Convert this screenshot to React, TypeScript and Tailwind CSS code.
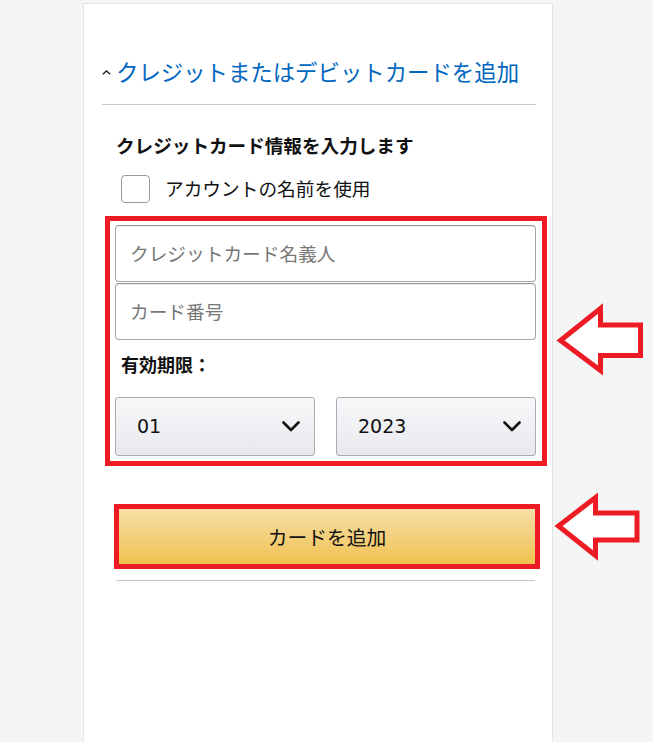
import React from "react";

const FONT = { fontFamily: '"DejaVu Sans", "Noto Sans CJK JP", sans-serif' };
const JP = { fontFamily: '"Noto Sans CJK JP", "DejaVu Sans", sans-serif' };

function Chevron() {
  return (
    <svg width="18" height="11" viewBox="0 0 18 11" className="shrink-0">
      <polyline points="1.5,1.5 9,9 16.5,1.5" fill="none" stroke="#111" strokeWidth="2.6" strokeLinecap="round" strokeLinejoin="round" />
    </svg>
  );
}

function Arrow({ pts }: { pts: string }) {
  return (
    <polygon points={pts} fill="#ffffff" stroke="#ed1c24" strokeWidth="5" strokeLinejoin="miter" strokeMiterlimit={10} />
  );
}

export default function App() {
  return (
    <div className="relative w-[653px] h-[742px] overflow-hidden bg-[#f4f5f5]" style={FONT}>
      <div className="ml-[83px] mt-[3px] w-[470px] h-[739px] bg-white border-t border-l border-r border-[#e3e3e3] pl-[18px] pr-[16px]">
        {/* heading */}
        <div className="pt-[51px] flex items-center h-[83px]">
          <svg width="9" height="5" viewBox="0 0 9 5" className="mt-[3px] shrink-0">
            <polyline points="0.8,4.2 4.5,0.9 8.2,4.2" fill="none" stroke="#222" strokeWidth="1.4" />
          </svg>
          <span className="ml-[5px] text-[22.4px] leading-[32px] text-[#0066c0] whitespace-nowrap" style={JP}>
            クレジットまたはデビットカードを追加
          </span>
        </div>
        <div className="mt-[17px] h-px bg-[#c9c9c9]" />

        <div className="pl-[14px] pr-[1px]">
          <div className="mt-[27px] text-[18.6px] leading-[26px] font-bold text-[#111]" style={JP}>
            クレジットカード情報を入力します
          </div>
          <div className="mt-[17px] flex items-center">
            <div className="ml-[5px] w-[29px] h-[28px] rounded-[4px] border-[1.5px] border-[#9a9a9a] bg-white" />
            <span className="ml-[15px] -mt-[2px] text-[18.7px] leading-[26px] text-[#111]" style={JP}>
              アカウントの名前を使用
            </span>
          </div>

          {/* red highlight box */}
          <div className="mt-[13px] -ml-[11px] w-[442px] border-[5px] border-[#ed1c24] pt-[4px] pl-[5px] pr-[6px] pb-[5px]">
            <div className="h-[57px] rounded-[4px] border border-[#a6a6a6] border-t-[#949494] shadow-[inset_0_1px_0_rgba(0,0,0,0.07)] flex items-center pl-[14px]">
              <span className="text-[18.7px] text-[#777]" style={JP}>クレジットカード名義人</span>
            </div>
            <div className="mt-[1px] h-[57px] rounded-[4px] border border-[#a6a6a6] border-t-[#949494] shadow-[inset_0_1px_0_rgba(0,0,0,0.07)] flex items-center pl-[14px]">
              <span className="text-[18.7px] text-[#777]" style={JP}>カード番号</span>
            </div>
            <div className="mt-[11px] ml-[6px] text-[18px] leading-[26px] font-bold text-[#111]" style={JP}>
              有効期限：
            </div>
            <div className="mt-[20px] flex justify-between">
              <div className="w-[200px] h-[59px] rounded-[3px] border border-[#a9adb3] bg-gradient-to-b from-[#f7f8fa] to-[#e7e9ec] flex items-center justify-between pl-[21px] pr-[14px]">
                <span className="text-[19px] text-[#111]">01</span>
                <Chevron />
              </div>
              <div className="w-[200px] h-[59px] rounded-[3px] border border-[#a9adb3] bg-gradient-to-b from-[#f7f8fa] to-[#e7e9ec] flex items-center justify-between pl-[21px] pr-[14px]">
                <span className="text-[19px] text-[#111]">2023</span>
                <Chevron />
              </div>
            </div>
          </div>

          {/* add card button */}
          <div className="mt-[38px] -ml-[2px] w-[426px] h-[65px] border-[5px] border-[#ed1c24]">
            <div className="h-full bg-gradient-to-b from-[#f7dfa5] to-[#f0c14b] flex items-center justify-center">
              <span className="text-[19.8px] text-[#111]" style={JP}>カードを追加</span>
            </div>
          </div>
          <div className="mt-[11px] h-px bg-[#c4c4c4]" />
        </div>
      </div>

      {/* annotation arrows */}
      <svg className="absolute left-0 top-0 pointer-events-none" width="653" height="742" viewBox="0 0 653 742">
        <Arrow pts="560.5,340.5 600.5,308.5 600.5,325 640.5,325 640.5,355.5 600.5,355.5 600.5,370.5" />
        <Arrow pts="558.5,526 595.5,497.5 595.5,513 637,513 637,540 595.5,540 595.5,555.5" />
      </svg>
    </div>
  );
}
